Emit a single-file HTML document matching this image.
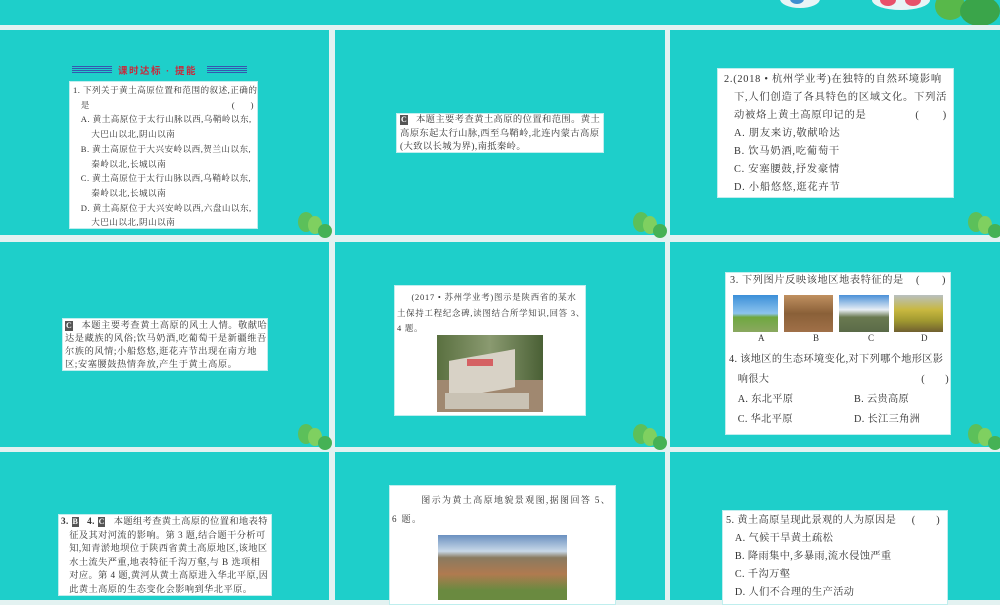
<!DOCTYPE html>
<html><head><meta charset="utf-8"><style>
*{margin:0;padding:0;box-sizing:border-box}
body{width:1000px;height:600px;overflow:hidden;background:#e3f2f1;position:relative;font-family:"Liberation Serif","Noto Serif CJK SC",serif;color:#333}
.p{position:absolute;background:#1ecfca;overflow:hidden}
.b{position:absolute;background:#fff;border:1px solid #bfeeee;font-size:9px;line-height:14.5px;color:#333;white-space:nowrap;overflow:hidden}
.tree{position:absolute;width:40px;height:30px}
.tree i{position:absolute;border-radius:50%;background:#6cc84f}
.k{display:inline-block;background:#555;color:#fff;font-weight:bold;padding:0 1px;line-height:10px;font-size:8px;letter-spacing:0}
.img{position:absolute}
</style></head><body>
<div class="p" style="left:0;top:0;width:1000px;height:25px">
 <div style="position:absolute;left:780px;top:-10px;width:40px;height:18px;border-radius:50%;background:#e8f4f6"></div>
 <div style="position:absolute;left:872px;top:-10px;width:58px;height:20px;border-radius:50%;background:#e8f4f6"></div>
 <div style="position:absolute;left:880px;top:-6px;width:16px;height:12px;border-radius:50%;background:#e8506a"></div>
 <div style="position:absolute;left:905px;top:-6px;width:16px;height:12px;border-radius:50%;background:#e8506a"></div>
 <div style="position:absolute;left:790px;top:-6px;width:14px;height:10px;border-radius:50%;background:#3d8fd0"></div>
 <div style="position:absolute;left:935px;top:-8px;width:30px;height:28px;border-radius:50%;background:#58b84a"></div>
 <div style="position:absolute;left:960px;top:-4px;width:40px;height:30px;border-radius:50%;background:#3aa54a"></div>
</div>
<div class="p" style="left:0;top:30px;width:329px;height:205px"></div>
<div class="p" style="left:335px;top:30px;width:330px;height:205px"></div>
<div class="p" style="left:670px;top:30px;width:330px;height:205px"></div>
<div class="p" style="left:0;top:242px;width:329px;height:205px"></div>
<div class="p" style="left:335px;top:242px;width:330px;height:205px"></div>
<div class="p" style="left:670px;top:242px;width:330px;height:205px"></div>
<div class="p" style="left:0;top:452px;width:329px;height:148px"></div>
<div class="p" style="left:335px;top:452px;width:330px;height:148px"></div>
<div class="p" style="left:670px;top:452px;width:330px;height:148px"></div>

<div class="tree" style="left:292px;top:208px"><i style="left:6px;top:4px;width:16px;height:20px;background:#5cc05a"></i><i style="left:16px;top:8px;width:14px;height:18px;background:#7fd060"></i><i style="left:26px;top:16px;width:14px;height:14px;background:#45b255"></i></div>
<div class="tree" style="left:627px;top:208px"><i style="left:6px;top:4px;width:16px;height:20px;background:#5cc05a"></i><i style="left:16px;top:8px;width:14px;height:18px;background:#7fd060"></i><i style="left:26px;top:16px;width:14px;height:14px;background:#45b255"></i></div>
<div class="tree" style="left:962px;top:208px"><i style="left:6px;top:4px;width:16px;height:20px;background:#5cc05a"></i><i style="left:16px;top:8px;width:14px;height:18px;background:#7fd060"></i><i style="left:26px;top:16px;width:14px;height:14px;background:#45b255"></i></div>
<div class="tree" style="left:292px;top:420px"><i style="left:6px;top:4px;width:16px;height:20px;background:#5cc05a"></i><i style="left:16px;top:8px;width:14px;height:18px;background:#7fd060"></i><i style="left:26px;top:16px;width:14px;height:14px;background:#45b255"></i></div>
<div class="tree" style="left:627px;top:420px"><i style="left:6px;top:4px;width:16px;height:20px;background:#5cc05a"></i><i style="left:16px;top:8px;width:14px;height:18px;background:#7fd060"></i><i style="left:26px;top:16px;width:14px;height:14px;background:#45b255"></i></div>
<div class="tree" style="left:962px;top:420px"><i style="left:6px;top:4px;width:16px;height:20px;background:#5cc05a"></i><i style="left:16px;top:8px;width:14px;height:18px;background:#7fd060"></i><i style="left:26px;top:16px;width:14px;height:14px;background:#45b255"></i></div>

<!-- P1 -->
<div style="position:absolute;left:72px;top:66px;width:40px;height:7px;background:repeating-linear-gradient(#3a3aa8 0 1px,transparent 1px 2px);opacity:.8"></div>
<div style="position:absolute;left:207px;top:66px;width:40px;height:7px;background:repeating-linear-gradient(#3a3aa8 0 1px,transparent 1px 2px);opacity:.8"></div>
<div style="position:absolute;left:118px;top:63px;font:bold 9.5px 'Liberation Sans','Noto Sans CJK SC',sans-serif;color:#c8283a;letter-spacing:1.5px">课时达标 · 提能</div>
<div class="b" style="left:69px;top:81px;width:189px;height:148px;padding:1px 3px;font-size:8.6px;line-height:14.7px;letter-spacing:0.45px">
1. 下列关于黄土高原位置和范围的叙述,正确的<br>&nbsp;&nbsp;&nbsp;是<span style="float:right">(&nbsp;&nbsp;&nbsp;&nbsp;&nbsp;&nbsp;)</span><br>
&nbsp;&nbsp;&nbsp;A. 黄土高原位于太行山脉以西,乌鞘岭以东,<br>&nbsp;&nbsp;&nbsp;&nbsp;&nbsp;&nbsp;&nbsp;大巴山以北,阴山以南<br>
&nbsp;&nbsp;&nbsp;B. 黄土高原位于大兴安岭以西,贺兰山以东,<br>&nbsp;&nbsp;&nbsp;&nbsp;&nbsp;&nbsp;&nbsp;秦岭以北,长城以南<br>
&nbsp;&nbsp;&nbsp;C. 黄土高原位于太行山脉以西,乌鞘岭以东,<br>&nbsp;&nbsp;&nbsp;&nbsp;&nbsp;&nbsp;&nbsp;秦岭以北,长城以南<br>
&nbsp;&nbsp;&nbsp;D. 黄土高原位于大兴安岭以西,六盘山以东,<br>&nbsp;&nbsp;&nbsp;&nbsp;&nbsp;&nbsp;&nbsp;大巴山以北,阴山以南</div>

<!-- P2 -->
<div class="b" style="left:396px;top:113px;width:208px;height:40px;padding:0 3px;font-size:9.3px;line-height:13.5px;letter-spacing:0.4px">
<span class="k">C</span>&nbsp;&nbsp; 本题主要考查黄土高原的位置和范围。黄土<br>高原东起太行山脉,西至乌鞘岭,北连内蒙古高原<br>(大致以长城为界),南抵秦岭。</div>

<!-- P3 -->
<div class="b" style="left:717px;top:68px;width:237px;height:130px;padding:2px 6px;font-size:10.3px;line-height:18px;letter-spacing:0.75px">
2.(2018 • 杭州学业考)在独特的自然环境影响<br>&nbsp;&nbsp;&nbsp;下,人们创造了各具特色的区域文化。下列活<br>&nbsp;&nbsp;&nbsp;动被烙上黄土高原印记的是<span style="float:right;margin-right:0">(&nbsp;&nbsp;&nbsp;&nbsp;&nbsp;&nbsp;&nbsp;)</span><br>
&nbsp;&nbsp;&nbsp;A. 朋友来访,敬献哈达<br>&nbsp;&nbsp;&nbsp;B. 饮马奶酒,吃葡萄干<br>&nbsp;&nbsp;&nbsp;C. 安塞腰鼓,抒发豪情<br>&nbsp;&nbsp;&nbsp;D. 小船悠悠,逛花卉节</div>

<!-- P4 -->
<div class="b" style="left:62px;top:318px;width:206px;height:53px;padding:0 2px;font-size:9.2px;line-height:13px;letter-spacing:0.6px">
<span class="k">C</span>&nbsp;&nbsp; 本题主要考查黄土高原的风土人情。敬献哈<br>达是藏族的风俗;饮马奶酒,吃葡萄干是新疆维吾<br>尔族的风情;小船悠悠,逛花卉节出现在南方地<br>区;安塞腰鼓热情奔放,产生于黄土高原。</div>

<!-- P5 -->
<div class="b" style="left:394px;top:285px;width:192px;height:131px;padding:4px 2px;font-size:8.4px;line-height:15.5px;letter-spacing:0.8px">
&nbsp;&nbsp;&nbsp;&nbsp;&nbsp;(2017 • 苏州学业考)图示是陕西省的某水<br>土保持工程纪念碑,读图结合所学知识,回答 3、<br>4 题。</div>
<div class="img" style="left:437px;top:335px;width:106px;height:77px;background:linear-gradient(90deg,#5a7040,#8a9a70 50%,#4a6035);">
 <div style="position:absolute;left:0;top:45px;width:106px;height:32px;background:#a08870"></div>
 <div style="position:absolute;left:12px;top:20px;width:66px;height:38px;background:#d8d2c6;transform:skewY(-10deg)"></div>
 <div style="position:absolute;left:8px;top:58px;width:84px;height:16px;background:#c9c2b4"></div>
 <div style="position:absolute;left:30px;top:24px;width:26px;height:7px;background:#d4454a;opacity:.8"></div>
</div>

<!-- P6 -->
<div class="b" style="left:725px;top:272px;width:226px;height:163px;padding:0 4px;font-size:10.2px;line-height:15px;letter-spacing:0.6px">
3. 下列图片反映该地区地表特征的是<span style="float:right">(&nbsp;&nbsp;&nbsp;&nbsp;&nbsp;&nbsp;&nbsp;)</span></div>
<div class="img" style="left:733px;top:295px;width:45px;height:37px;background:linear-gradient(#3b8fd8,#8cc4ee 50%,#6fa840 60%,#8aa860)"></div>
<div class="img" style="left:784px;top:295px;width:49px;height:37px;background:linear-gradient(#c09060,#8a6038 50%,#a07048)"></div>
<div class="img" style="left:839px;top:295px;width:50px;height:37px;background:linear-gradient(#4a90d8,#e8eef4 40%,#6a7a50 60%,#5a6a48)"></div>
<div class="img" style="left:894px;top:295px;width:49px;height:37px;background:linear-gradient(#b8c0c0,#c8b840 40%,#a09830 70%,#706030)"></div>
<div style="position:absolute;left:725px;top:333px;width:226px;font-size:9px;color:#333">
<span style="position:absolute;left:33px">A</span><span style="position:absolute;left:88px">B</span><span style="position:absolute;left:143px">C</span><span style="position:absolute;left:196px">D</span></div>
<div style="position:absolute;left:729px;top:350px;font-size:10.2px;line-height:20px;color:#333;white-space:nowrap;width:220px;letter-spacing:0.35px">
4. 该地区的生态环境变化,对下列哪个地形区影<br>&nbsp;&nbsp;&nbsp;响很大<span style="float:right">(&nbsp;&nbsp;&nbsp;&nbsp;&nbsp;&nbsp;&nbsp;)</span><br>
&nbsp;&nbsp;&nbsp;A. 东北平原<span style="position:absolute;left:125px">B. 云贵高原</span><br>&nbsp;&nbsp;&nbsp;C. 华北平原<span style="position:absolute;left:125px">D. 长江三角洲</span></div>

<!-- P7 -->
<div class="b" style="left:58px;top:514px;width:214px;height:82px;padding:0 2px;font-size:9.2px;line-height:13.5px;letter-spacing:0.45px">
<b>3. <span class="k">B</span>&nbsp;&nbsp; 4. <span class="k">C</span></b>&nbsp;&nbsp; 本题组考查黄土高原的位置和地表特<br>&nbsp;&nbsp;&nbsp;征及其对河流的影响。第 3 题,结合题干分析可<br>&nbsp;&nbsp;&nbsp;知,知青淤地坝位于陕西省黄土高原地区,该地区<br>&nbsp;&nbsp;&nbsp;水土流失严重,地表特征千沟万壑,与 B 选项相<br>&nbsp;&nbsp;&nbsp;对应。第 4 题,黄河从黄土高原进入华北平原,因<br>&nbsp;&nbsp;&nbsp;此黄土高原的生态变化会影响到华北平原。</div>

<!-- P8 -->
<div class="b" style="left:389px;top:485px;width:227px;height:120px;padding:5px 2px;font-size:9px;line-height:19px;letter-spacing:1.4px">
&nbsp;&nbsp;&nbsp;&nbsp;&nbsp;&nbsp;&nbsp;&nbsp;图示为黄土高原地貌景观图,据图回答 5、<br>6 题。</div>
<div class="img" style="left:438px;top:535px;width:129px;height:65px;background:linear-gradient(#6a90c0,#c8d8e8 25%,#8a7a60 35%,#b07a50 60%,#6a8a40 85%)"></div>

<!-- P9 -->
<div class="b" style="left:722px;top:510px;width:226px;height:95px;padding:1px 3px;font-size:10.2px;line-height:18px;letter-spacing:0.4px">
5. 黄土高原呈现此景观的人为原因是<span style="float:right;margin-right:4px">(&nbsp;&nbsp;&nbsp;&nbsp;&nbsp;&nbsp;&nbsp;)</span><br>
&nbsp;&nbsp;&nbsp;A. 气候干旱黄土疏松<br>&nbsp;&nbsp;&nbsp;B. 降雨集中,多暴雨,流水侵蚀严重<br>&nbsp;&nbsp;&nbsp;C. 千沟万壑<br>&nbsp;&nbsp;&nbsp;D. 人们不合理的生产活动</div>
</body></html>
